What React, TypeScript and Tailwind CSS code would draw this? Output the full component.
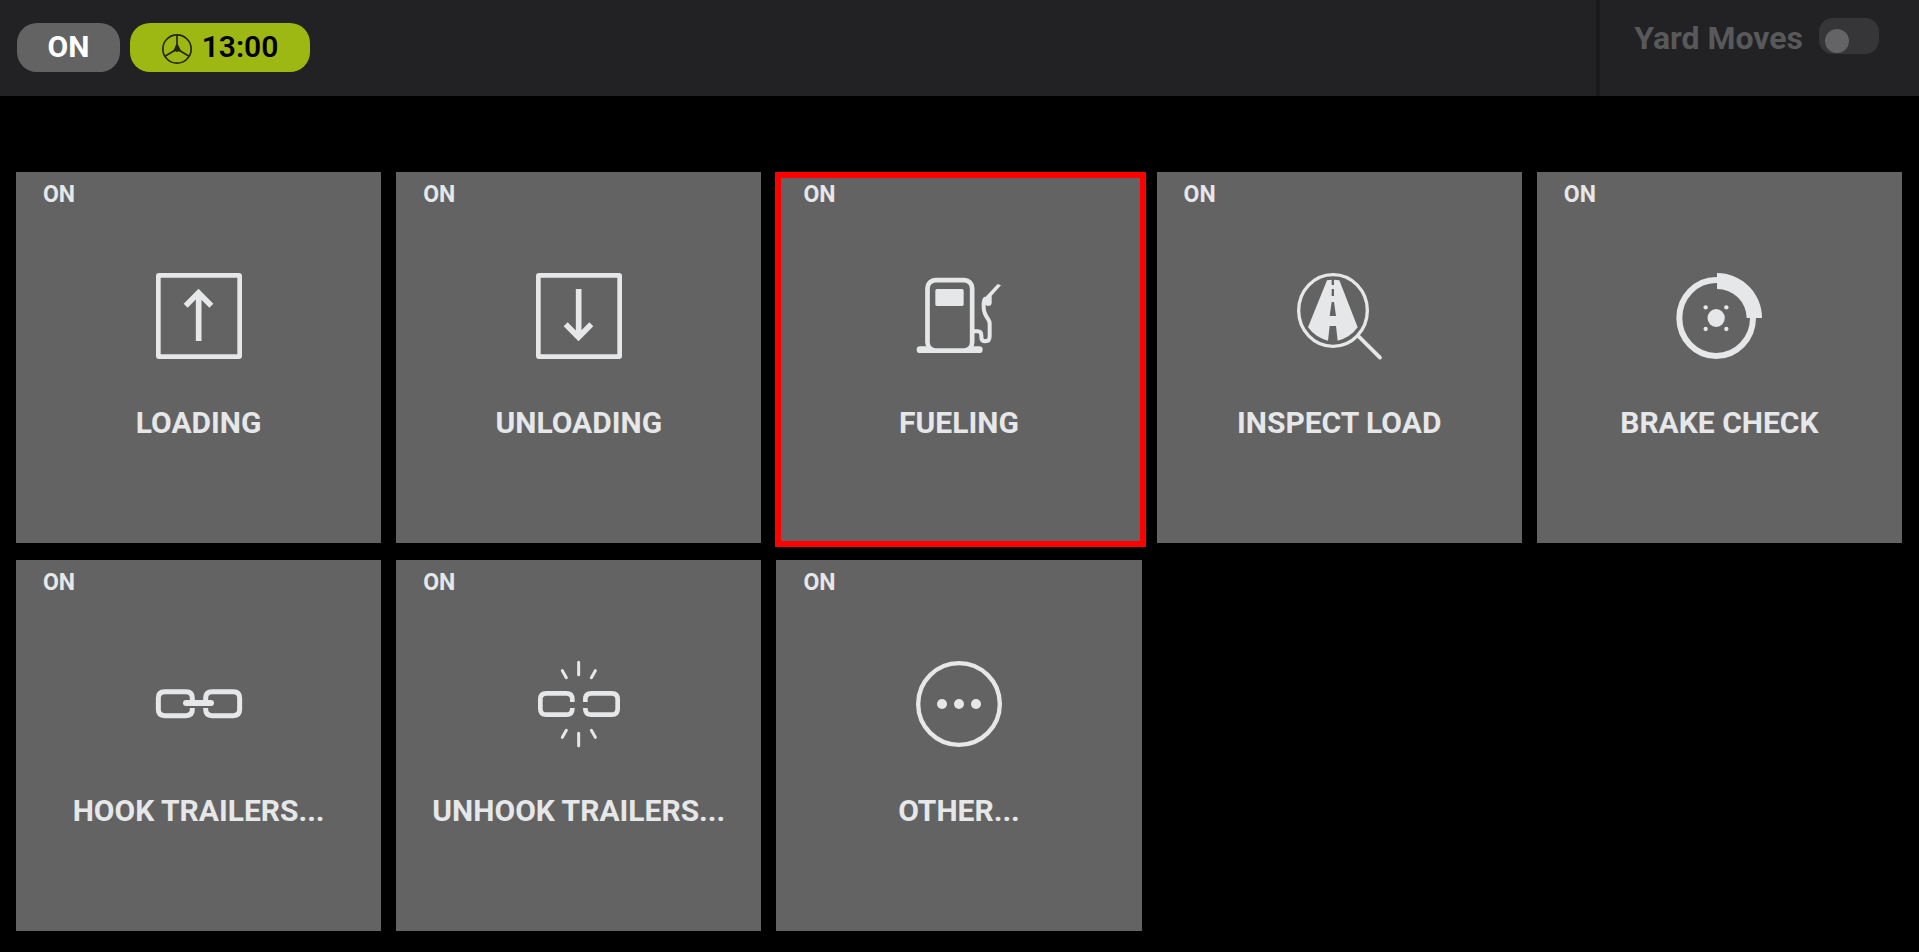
import type { ReactNode } from 'react';

type Activity = {
  label: string;
  status: string;
  icon: ReactNode;
  highlighted?: boolean;
};

function TileIcon({ viewBox, children }: { viewBox: string; children: ReactNode }) {
  return (
    <svg viewBox={viewBox} className="size-[86px] overflow-visible text-[#e6e7e8]" fill="none" aria-hidden="true">
      {children}
    </svg>
  );
}

function LoadingIcon() {
  return (
    <TileIcon viewBox="48 39 258 258">
      <rect x="55" y="46" width="244" height="244" rx="2" stroke="currentColor" strokeWidth="14" />
      <path d="M176 243V98M137 137L175.500 98.500L214 137" stroke="currentColor" strokeWidth="17" />
    </TileIcon>
  );
}

function UnloadingIcon() {
  return (
    <TileIcon viewBox="48 39 258 258">
      <rect x="55" y="46" width="244" height="244" rx="2" stroke="currentColor" strokeWidth="14" />
      <path d="M176 87V230M137 193L175.500 231.500L214 193" stroke="currentColor" strokeWidth="17" />
    </TileIcon>
  );
}

function FuelIcon() {
  return (
    <TileIcon viewBox="48 39 258 258">
      <rect x="82.500" y="60.500" width="134" height="211" rx="24" stroke="currentColor" strokeWidth="14" />
      <rect x="106" y="87" width="85" height="51" rx="5" fill="currentColor" />
      <path
        d="M60 259H78Q84 268 94 271H205Q215 268 220 259H238A10 10 0 0 1 238 279H60A10 10 0 0 1 60 259Z"
        fill="currentColor"
      />
      <path
        d="M221 214H233Q244 214 244 226V232Q244 244 256 244Q269 244 269 229V191Q269 184 264 177Q251 159 251 142V128Q251 120 257 114"
        stroke="currentColor"
        strokeWidth="12"
      />
      <path d="M293 72L303 76L275 107V129Q275 138 263 138L256 134L247 125Q248 118 254 113Z" fill="currentColor" />
    </TileIcon>
  );
}

function InspectIcon() {
  return (
    <TileIcon viewBox="48 39 258 258">
      <ellipse cx="159" cy="151.500" rx="103" ry="107.500" stroke="currentColor" strokeWidth="10" />
      <path d="M236 229L300 293" stroke="currentColor" strokeWidth="11" strokeLinecap="round" />
      <path
        fillRule="evenodd"
        d="M141 61Q148 59 155 59V75H162V59Q170 59 178 61L233 202Q211 233 173 242L168 198H149L144 242Q107 233 84 202ZM155 87V108H162V87ZM155 126L149 168H168L162 126Z"
        fill="currentColor"
      />
    </TileIcon>
  );
}

function BrakeIcon() {
  return (
    <TileIcon viewBox="48 39 258 258">
      <ellipse cx="168.500" cy="174" rx="110.500" ry="114" stroke="currentColor" strokeWidth="18" />
      <path d="M171 39A135 135 0 0 1 306 174H260A89 87 0 0 0 171 87Z" fill="currentColor" />
      <ellipse cx="168.500" cy="174" rx="26" ry="27" fill="currentColor" />
      <circle cx="137" cy="142" r="6.500" fill="currentColor" />
      <circle cx="199" cy="142" r="6.500" fill="currentColor" />
      <circle cx="137" cy="207" r="6.500" fill="currentColor" />
      <circle cx="199" cy="207" r="6.500" fill="currentColor" />
    </TileIcon>
  );
}

function HookIcon() {
  return (
    <TileIcon viewBox="48 33 258 258">
      <path
        d="M157 152V144Q157 125 138 125H74Q55 125 55 144V178Q55 197 74 197H138Q157 197 157 178V174M197 152V144Q197 125 216 125H280Q299 125 299 144V178Q299 197 280 197H216Q197 197 197 178V174"
        stroke="currentColor"
        strokeWidth="15"
      />
      <path d="M138 159H213" stroke="currentColor" strokeWidth="18" strokeLinecap="round" />
    </TileIcon>
  );
}

function UnhookIcon() {
  return (
    <TileIcon viewBox="48 33 258 258">
      <path
        d="M157 156V148Q157 130 139 130H79Q61 130 61 148V176Q61 194 79 194H139Q157 194 157 176V174M196 156V148Q196 130 214 130H275Q293 130 293 148V176Q293 194 275 194H214Q196 194 196 176V174"
        stroke="currentColor"
        strokeWidth="14"
      />
      <path
        d="M176 37V74M127 62L139 83M226 62L214 83M176 250V287M139 241L127 262M214 241L226 262"
        stroke="currentColor"
        strokeWidth="9"
        strokeLinecap="round"
      />
    </TileIcon>
  );
}

function OtherIcon() {
  return (
    <TileIcon viewBox="48 33 258 258">
      <circle cx="177" cy="162" r="122.500" stroke="currentColor" strokeWidth="13" />
      <circle cx="126" cy="162" r="15" fill="currentColor" />
      <circle cx="177" cy="162" r="15" fill="currentColor" />
      <circle cx="228" cy="162" r="15" fill="currentColor" />
    </TileIcon>
  );
}

function WheelIcon() {
  return (
    <svg viewBox="489 102 90 90" className="mt-1 size-[30px] text-[#23260f]" fill="none" aria-hidden="true">
      <circle cx="534" cy="147" r="42.500" stroke="currentColor" strokeWidth="5" />
      <path d="M534 105V147L499 168M534 147L569 168" stroke="currentColor" strokeWidth="5" />
      <path d="M531 134H537L544 148L548 156L538 154Q534 158 530 154L520 156L525 148Z" fill="currentColor" />
    </svg>
  );
}

const activities: Activity[] = [
  { label: 'LOADING', status: 'ON', icon: <LoadingIcon /> },
  { label: 'UNLOADING', status: 'ON', icon: <UnloadingIcon /> },
  { label: 'FUELING', status: 'ON', icon: <FuelIcon />, highlighted: true },
  { label: 'INSPECT LOAD', status: 'ON', icon: <InspectIcon /> },
  { label: 'BRAKE CHECK', status: 'ON', icon: <BrakeIcon /> },
  { label: 'HOOK TRAILERS...', status: 'ON', icon: <HookIcon /> },
  { label: 'UNHOOK TRAILERS...', status: 'ON', icon: <UnhookIcon /> },
  { label: 'OTHER...', status: 'ON', icon: <OtherIcon /> },
];

function ActivityTile({ activity }: { activity: Activity }) {
  return (
    <button type="button" className="relative flex flex-col items-center bg-[#636363] pt-[9px] pb-[102px] text-[#e6e7e8]">
      <span className="self-start pl-[27px] text-[23px] leading-7 font-bold">{activity.status}</span>
      <span className="mt-16">{activity.icon}</span>
      <span className="mt-[46px] text-[30px] leading-9 font-bold">{activity.label}</span>
      {activity.highlighted ? (
        <span className="pointer-events-none absolute top-0 -right-1 -bottom-1 -left-px border-6 border-[#ff0000]" />
      ) : null}
    </button>
  );
}

export default function App() {
  return (
    <div className="min-h-screen bg-black font-['Roboto',sans-serif]">
      <header className="flex h-24 justify-between bg-[#222224]">
        <div className="flex items-start gap-2.5 pt-[23px] pl-[17px]">
          <button
            type="button"
            className="flex h-[49px] w-[103px] items-center justify-center rounded-[20px] bg-[#636363] pb-0.5 text-[30px] leading-9 font-bold text-white"
          >
            ON
          </button>
          <button
            type="button"
            className="flex h-[49px] w-[180px] items-center justify-center gap-2.5 rounded-[20px] bg-[#9db713] pb-0.5 text-[30px] leading-9 font-semibold text-black"
          >
            <WheelIcon />
            13:00
          </button>
        </div>
        <label className="flex items-start gap-4 border-l-4 border-[#1a1a1c] pt-[18px] pr-10 pl-[34px] text-[32px] leading-10 font-bold text-[#59595b]">
          Yard Moves
          <input
            type="checkbox"
            role="switch"
            disabled
            className="flex h-9 w-[60px] appearance-none items-end rounded-[14px] bg-[#363638] px-1.5 pb-px before:size-6 before:rounded-full before:bg-[#646467] before:content-['']"
          />
        </label>
      </header>

      <main className="grid grid-cols-5 gap-x-[15px] gap-y-[17px] pt-[76px] pr-[17px] pb-5 pl-4">
        {activities.map((activity) => (
          <ActivityTile key={activity.label} activity={activity} />
        ))}
      </main>
    </div>
  );
}
